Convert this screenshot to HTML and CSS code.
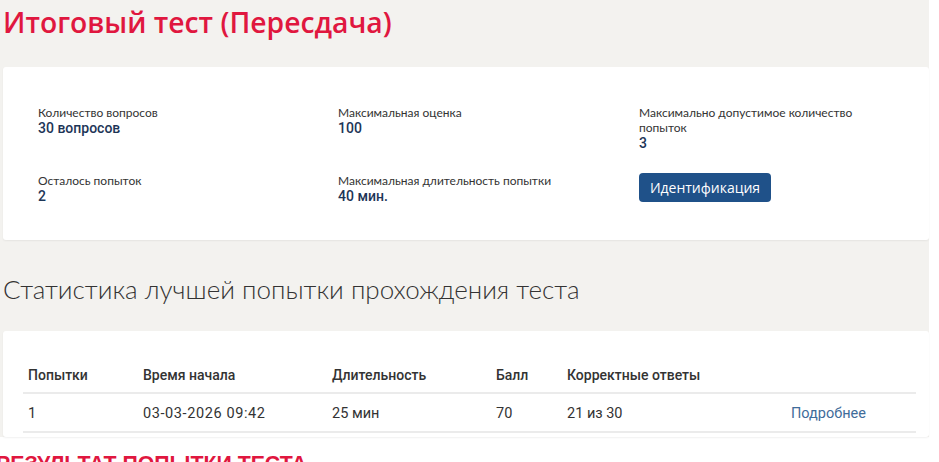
FILE: index.html
```html
<!DOCTYPE html>
<html lang="ru">
<head>
  <meta charset="UTF-8" />
  <meta name="viewport" content="width=device-width, initial-scale=1.0" />
  <title>Итоговый тест (Пересдача)</title>
  <link rel="stylesheet" href="styles.css">
</head>
<body>
  <div class="page">
    <h1 class="test-title">Итоговый тест (Пересдача)</h1>

    <div class="card info-card">
      <div class="info-grid">
        <div class="info-item">
          <div class="info-label">Количество вопросов</div>
          <div class="info-value">30 вопросов</div>
        </div>
        <div class="info-item">
          <div class="info-label">Максимальная оценка</div>
          <div class="info-value">100</div>
        </div>
        <div class="info-item">
          <div class="info-label">Максимально допустимое количество попыток</div>
          <div class="info-value">3</div>
        </div>
        <div class="info-item">
          <div class="info-label">Осталось попыток</div>
          <div class="info-value">2</div>
        </div>
        <div class="info-item">
          <div class="info-label">Максимальная длительность попытки</div>
          <div class="info-value">40 мин.</div>
        </div>
        <div class="info-item">
          <button class="btn-primary" id="identify">Идентификация</button>
        </div>
      </div>
    </div>

    <h2 class="section-title">Статистика лучшей попытки прохождения теста</h2>

    <div class="card stats-card">
      <table class="stats-table">
        <colgroup>
          <col class="col-attempt">
          <col class="col-start">
          <col class="col-duration">
          <col class="col-score">
          <col class="col-correct">
          <col>
        </colgroup>
        <thead>
          <tr>
            <th>Попытки</th>
            <th>Время начала</th>
            <th>Длительность</th>
            <th>Балл</th>
            <th>Корректные ответы</th>
            <th></th>
          </tr>
        </thead>
        <tbody>
          <tr>
            <td>1</td>
            <td class="cell-date">03-03-2026 09:42</td>
            <td>25 мин</td>
            <td>70</td>
            <td>21 из 30</td>
            <td><a href="#" class="details-link">Подробнее</a></td>
          </tr>
        </tbody>
      </table>
    </div>
  </div>

  <div class="result-head">Результат попытки теста</div>
</body>
</html>
```

FILE: styles.css
```css
:root {
  --page-bg: #f3f2ef;
  --card-bg: #ffffff;
  --accent-red: #e0173f;
  --text-color: #333333;
  --value-color: #1d3557;
  --button-color: #1f5189;
  --link-color: #3f6c9a;
  --line-color: #ebebeb;
}

body {
  margin: 0;
  padding: 0;
  font-family: Roboto, 'Open Sans', sans-serif;
  color: var(--text-color);
  background-color: #ffffff;
  overflow: hidden;
}

.page {
  width: 926px;
  padding: 0 0 0 3px;
  background-color: var(--page-bg);
}

.test-title {
  margin: 0;
  padding: 2px 0 0;
  font-family: 'Open Sans', sans-serif;
  font-size: 28.3px;
  font-weight: 600;
  line-height: 40px;
  color: var(--accent-red);
}

.card {
  background-color: var(--card-bg);
  border-radius: 3px;
  box-shadow: 0 1px 2px rgba(0, 0, 0, 0.06);
}

.info-card {
  margin-top: 25px;
  padding: 38px 35px;
  height: 97px;
}

.info-grid {
  display: grid;
  grid-template-columns: 300px 301px 1fr;
  grid-template-rows: 48px 29px;
  row-gap: 20px;
}

.info-label {
  max-width: 240px;
  font-family: Lato, Roboto, sans-serif;
  font-size: 12px;
  line-height: 15px;
}

.info-value {
  font-size: 14px;
  font-weight: 500;
  line-height: 16px;
  color: var(--value-color);
}

.btn-primary {
  width: 132px;
  height: 29px;
  padding: 0;
  border: none;
  border-radius: 4px;
  background-color: var(--button-color);
  color: #fff;
  font-family: 'Open Sans', sans-serif;
  font-size: 14px;
  cursor: pointer;
}

.section-title {
  margin: 0;
  padding: 31px 0 0;
  font-family: Lato, Roboto, sans-serif;
  font-size: 26px;
  font-weight: 300;
  line-height: 36px;
  color: var(--text-color);
}

.stats-card {
  margin-top: 24px;
  padding: 26px 13px 4px 20px;
}

.stats-table {
  width: 100%;
  border-collapse: collapse;
  font-size: 14.5px;
}

.col-attempt { width: 115px; }
.col-start { width: 189px; }
.col-duration { width: 164px; }
.col-score { width: 71px; }
.col-correct { width: 224px; }

.stats-table th {
  text-align: left;
  font-size: 14px;
  font-weight: 500;
  padding: 9px 5px 7px;
  line-height: 19px;
  border-bottom: 2px solid var(--line-color);
}

.stats-table td {
  padding: 10px 5px 8px;
  line-height: 19px;
  border-bottom: 2px solid var(--line-color);
}

.stats-table .cell-date {
  letter-spacing: 0.6px;
}

.details-link {
  color: var(--link-color);
  text-decoration: none;
}

.result-head {
  margin: 15px 0 0 -4px;
  font-family: 'Liberation Sans', Arial, sans-serif;
  font-size: 21.3px;
  font-weight: 700;
  text-transform: uppercase;
  color: var(--accent-red);
}
```
